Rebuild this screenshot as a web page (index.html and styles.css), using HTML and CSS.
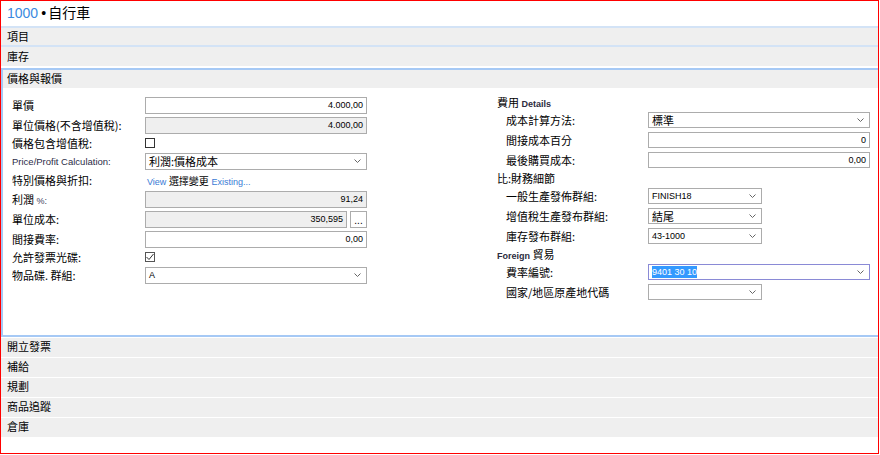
FILE: index.html
```html
<!DOCTYPE html>
<html lang="zh-Hant">
  <head>
    <meta charset="UTF-8" />
    <title>1000 • 自行車</title>
    <link rel="stylesheet" href="styles.css">
  </head>
  <body>
    <div class="frame">
      <div class="title"><span class="no">1000</span> <span class="dot">•</span>自行車</div>

      <div class="band band_top">項目</div>
      <div class="band band_top">庫存</div>

      <div class="section">
        <div class="band band_open">價格與報價</div>
        <div class="section_body">
          <div class="col_left">
            <div class="row">
              <div class="lbl">單價</div>
              <div class="field num">4.000,00</div>
            </div>
            <div class="row">
              <div class="lbl">單位價格(不含增值稅):</div>
              <div class="field num readonly">4.000,00</div>
            </div>
            <div class="row short">
              <div class="lbl">價格包含增值稅:</div>
              <div class="check"></div>
            </div>
            <div class="row">
              <div class="lbl latin">Price/Profit Calculation:</div>
              <div class="field select"><span class="val">利潤:價格成本</span><svg class="chev" width="7" height="4" viewBox="0 0 7 4"><path d="M0.5 0.5 L3.5 3.5 L6.5 0.5" fill="none" stroke="#666" stroke-width="1"/></svg></div>
            </div>
            <div class="row link_row">
              <div class="lbl">特別價格與折扣:</div>
              <div class="links"><span class="lnk">View</span> <span class="cjk">選擇變更</span> <span class="lnk">Existing...</span></div>
            </div>
            <div class="row">
              <div class="lbl">利潤 <span class="pct">%:</span></div>
              <div class="field num readonly">91,24</div>
            </div>
            <div class="row">
              <div class="lbl">單位成本:</div>
              <div class="field num readonly narrow">350,595</div>
              <div class="dots">...</div>
            </div>
            <div class="row">
              <div class="lbl">間接費率:</div>
              <div class="field num">0,00</div>
            </div>
            <div class="row short">
              <div class="lbl">允許發票光碟:</div>
              <div class="check checked"><svg width="8" height="8" viewBox="0 0 8 8"><path d="M0.5 4 L3 6.5 L7.5 1" fill="none" stroke="#333" stroke-width="1"/></svg></div>
            </div>
            <div class="row">
              <div class="lbl">物品碟. 群組:</div>
              <div class="field select"><span class="val latin_val">A</span><svg class="chev" width="7" height="4" viewBox="0 0 7 4"><path d="M0.5 0.5 L3.5 3.5 L6.5 0.5" fill="none" stroke="#666" stroke-width="1"/></svg></div>
            </div>
          </div>

          <div class="col_right">
            <div class="rhead">費用 <b>Details</b></div>
            <div class="rrow">
              <div class="rlbl">成本計算方法:</div>
              <div class="field select wide"><span class="val">標準</span><svg class="chev" width="7" height="4" viewBox="0 0 7 4"><path d="M0.5 0.5 L3.5 3.5 L6.5 0.5" fill="none" stroke="#666" stroke-width="1"/></svg></div>
            </div>
            <div class="rrow">
              <div class="rlbl">間接成本百分</div>
              <div class="field num wide">0</div>
            </div>
            <div class="rrow">
              <div class="rlbl">最後購買成本:</div>
              <div class="field num wide">0,00</div>
            </div>
            <div class="rhead">比:財務細節</div>
            <div class="rrow">
              <div class="rlbl">一般生產發佈群組:</div>
              <div class="field select small"><span class="val latin_val">FINISH18</span><svg class="chev" width="7" height="4" viewBox="0 0 7 4"><path d="M0.5 0.5 L3.5 3.5 L6.5 0.5" fill="none" stroke="#666" stroke-width="1"/></svg></div>
            </div>
            <div class="rrow">
              <div class="rlbl">增值稅生產發布群組:</div>
              <div class="field select small"><span class="val">結尾</span><svg class="chev" width="7" height="4" viewBox="0 0 7 4"><path d="M0.5 0.5 L3.5 3.5 L6.5 0.5" fill="none" stroke="#666" stroke-width="1"/></svg></div>
            </div>
            <div class="rrow">
              <div class="rlbl">庫存發布群組:</div>
              <div class="field select small"><span class="val latin_val">43-1000</span><svg class="chev" width="7" height="4" viewBox="0 0 7 4"><path d="M0.5 0.5 L3.5 3.5 L6.5 0.5" fill="none" stroke="#666" stroke-width="1"/></svg></div>
            </div>
            <div class="rhead"><b>Foreign</b> 貿易</div>
            <div class="rrow">
              <div class="rlbl">費率編號:</div>
              <div class="field select wide focus"><span class="val latin_val"><span class="sel">9401 30 10</span></span><svg class="chev" width="7" height="4" viewBox="0 0 7 4"><path d="M0.5 0.5 L3.5 3.5 L6.5 0.5" fill="none" stroke="#666" stroke-width="1"/></svg></div>
            </div>
            <div class="rrow">
              <div class="rlbl">國家/地區原產地代碼</div>
              <div class="field select small"><span class="val"></span><svg class="chev" width="7" height="4" viewBox="0 0 7 4"><path d="M0.5 0.5 L3.5 3.5 L6.5 0.5" fill="none" stroke="#666" stroke-width="1"/></svg></div>
            </div>
          </div>
        </div>
      </div>

      <div class="band band_bottom">開立發票</div>
      <div class="band band_bottom">補給</div>
      <div class="band band_bottom">規劃</div>
      <div class="band band_bottom">商品追蹤</div>
      <div class="band band_bottom">倉庫</div>
    </div>
  </body>
</html>
```

FILE: styles.css
```css
* {
  box-sizing: border-box;
}

body {
  margin: 0;
  background: #fff;
  color: #000;
  font-family: "Noto Sans CJK TC", "Liberation Sans", sans-serif;
  font-size: 11px;
}

.frame {
  width: 879px;
  height: 454px;
  border: 1px solid #ff0000;
  overflow: hidden;
}

.title {
  height: 25px;
  padding: 1px 0 0 6px;
  font-size: 14px;
  line-height: 20px;
}

.title .no {
  color: #3b8ae0;
  font-family: "Liberation Sans", sans-serif;
  font-size: 14px;
}

.title .dot {
  font-family: "Liberation Sans", sans-serif;
  margin-right: 2px;
}

.band {
  background: #efefef;
  padding-left: 6px;
  line-height: 17px;
  font-size: 11px;
}

.band_top {
  height: 19px;
  border-top: 2px solid #d3e3f6;
}

.band_top + .band_top {
  height: 21px;
  line-height: 19px;
}

.band_open {
  height: 18px;
  padding-left: 4px;
}

.band_bottom {
  height: 19px;
  margin-top: 1px;
}

.section {
  margin-top: 2px;
  border-top: 2px solid #a6c9f5;
  border-left: 2px solid #a6c9f5;
  border-bottom: 2px solid #a6c9f5;
}

.section_body {
  height: 247px;
  display: flex;
}

.col_left {
  margin-left: 9px;
  padding-top: 7px;
  width: 355px;
}

.row {
  display: flex;
  align-items: center;
  height: 20px;
}

.row.short {
  height: 16px;
}

.row.link_row {
  height: 18px;
}

.lbl {
  width: 133px;
  white-space: nowrap;
}

.lbl.latin {
  font-family: "Liberation Sans", sans-serif;
  font-size: 9.5px;
  color: #2c2c48;
}

.pct {
  font-family: "Liberation Sans", sans-serif;
  font-size: 9px;
  color: #404060;
}

.field {
  width: 222px;
  height: 17px;
  border: 1px solid #acacac;
  background: #fff;
  font-family: "Liberation Sans", sans-serif;
  font-size: 9px;
  line-height: 15px;
  padding: 0 3px;
  white-space: nowrap;
}

.field.num {
  text-align: right;
}

.field.readonly {
  background: #efefef;
}

.field.narrow {
  width: 203px;
}

.dots {
  width: 17px;
  height: 17px;
  margin-left: 3px;
  border: 1px solid #acacac;
  background: #fff;
  font-family: "Liberation Sans", sans-serif;
  font-size: 10px;
  line-height: 17px;
  text-align: center;
}

.select {
  display: flex;
  align-items: center;
}

.select .val {
  flex: 1;
  font-family: "Noto Sans CJK TC", sans-serif;
  font-size: 11px;
  line-height: 15px;
}

.select .val.latin_val {
  font-family: "Liberation Sans", sans-serif;
  font-size: 9px;
}

.chev {
  margin-right: 2px;
}

.check {
  width: 10px;
  height: 10px;
  border: 1px solid #333;
  background: #fff;
}

.check.checked {
  border-color: #555;
  display: flex;
  align-items: center;
  justify-content: center;
}

.links {
  padding-left: 2px;
  font-family: "Liberation Sans", sans-serif;
  font-size: 9px;
}

.lnk {
  color: #3a7bd5;
}

.links .cjk {
  font-family: "Noto Sans CJK TC", sans-serif;
  font-size: 10px;
}

.col_right {
  margin-left: 130px;
  padding-top: 6px;
}

.rhead {
  height: 16px;
  line-height: 16px;
  white-space: nowrap;
}

.rhead b {
  font-family: "Liberation Sans", sans-serif;
  font-size: 9px;
  color: #2c2c40;
}

.rrow {
  display: flex;
  align-items: center;
  height: 20px;
}

.rlbl {
  width: 151px;
  padding-left: 9px;
  white-space: nowrap;
}

.rrow .field {
  height: 16px;
  line-height: 14px;
}

.field.wide {
  width: 222px;
}

.field.small {
  width: 114px;
}

.field.focus {
  border-color: #8a8ad6;
}

.sel {
  background: #3399ff;
  color: #fff;
  padding: 1px 0;
}
```
